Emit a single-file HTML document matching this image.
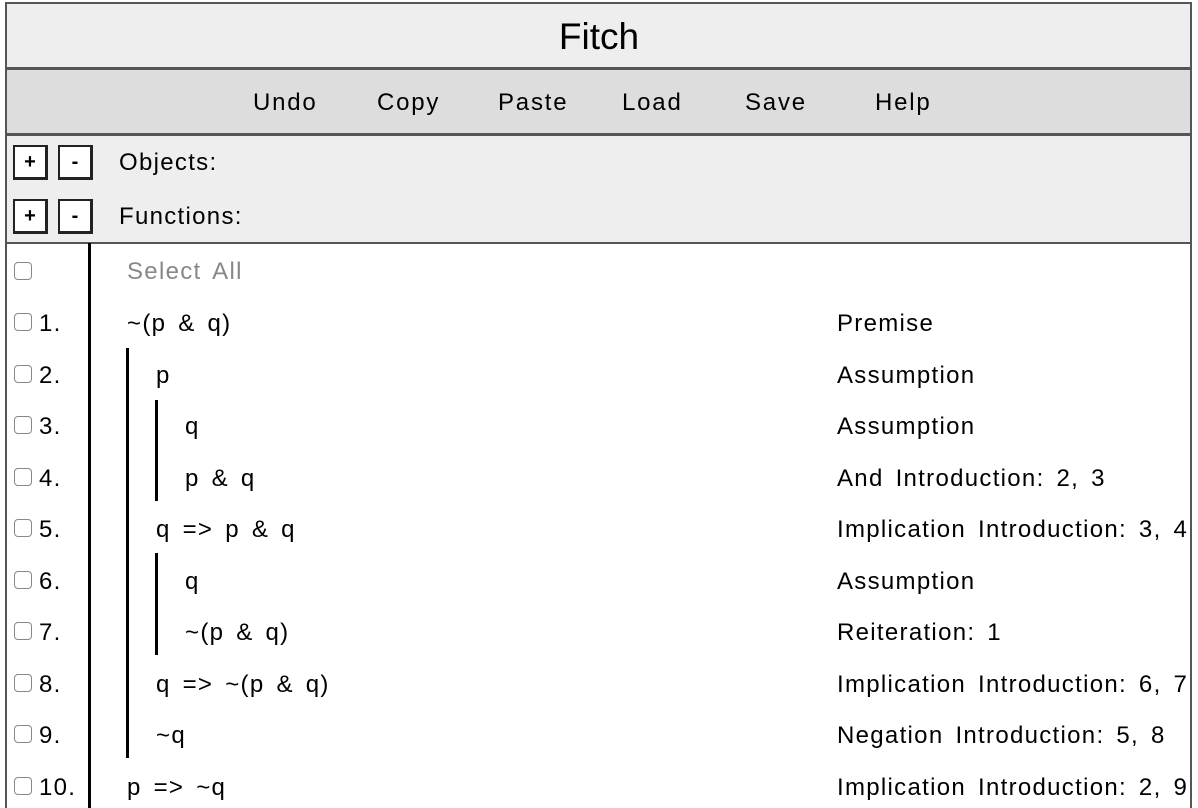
<!DOCTYPE html>
<html><head><meta charset="utf-8"><style>
*{margin:0;padding:0;box-sizing:border-box}
body{width:1198px;height:808px;overflow:hidden;background:#fff;font-family:"Liberation Sans",sans-serif;color:#000;position:relative}
.a{position:absolute;white-space:nowrap}
.box{position:absolute;left:5px;width:1187px;border:2px solid #555}
.btn{position:absolute;width:35px;height:35px;background:#fff;border:2px solid #222;border-right-width:3px;border-bottom-width:3px;font-weight:bold;font-size:20px;text-align:center;line-height:30px}
.cb{position:absolute;width:18px;height:18px;border:1.5px solid #888;border-radius:4px;background:#fff}
.t{position:absolute;font-size:24px;letter-spacing:1.3px;word-spacing:4px;white-space:nowrap;line-height:28px}
.bar{position:absolute;width:3px;background:#000}
</style></head><body>
<div class="box" style="top:2px;height:67px;background:#eee"></div>
<div class="box" style="top:68px;height:67px;background:#ddd"></div>
<div class="box" style="top:134px;height:110px;background:#eee"></div>
<div class="a" style="left:5px;top:243px;width:2px;height:565px;background:#555"></div>
<div class="a" style="left:1190px;top:243px;width:2px;height:565px;background:#555"></div>
<div class="a" style="left:0;top:14px;width:1198px;text-align:center;font-size:37px;line-height:46px">Fitch</div>
<div class="t" style="left:253px;top:89px;letter-spacing:1.8px">Undo</div>
<div class="t" style="left:377px;top:89px;letter-spacing:1.8px">Copy</div>
<div class="t" style="left:498px;top:89px;letter-spacing:1.8px">Paste</div>
<div class="t" style="left:622px;top:89px;letter-spacing:1.8px">Load</div>
<div class="t" style="left:745px;top:89px;letter-spacing:1.8px">Save</div>
<div class="t" style="left:875px;top:89px;letter-spacing:1.8px">Help</div>
<div class="btn" style="left:13px;top:145px">+</div>
<div class="btn" style="left:58px;top:145px">-</div>
<div class="t" style="left:119px;top:149px">Objects:</div>
<div class="btn" style="left:13px;top:199px">+</div>
<div class="btn" style="left:58px;top:199px">-</div>
<div class="t" style="left:119px;top:203px">Functions:</div>
<div class="bar" style="left:88px;top:243px;height:565px"></div>
<div class="bar" style="left:126px;top:348px;height:410px"></div>
<div class="bar" style="left:155px;top:400px;height:101px"></div>
<div class="bar" style="left:155px;top:553px;height:102px"></div>
<div class="cb" style="left:14px;top:262px"></div>
<div class="t" style="left:127px;top:258px;color:#888">Select All</div>

<div class="cb" style="left:14px;top:313px"></div><div class="t" style="left:39px;top:310px">1.</div><div class="t" style="left:127px;top:310px">~(p &amp; q)</div><div class="t" style="left:837px;top:310px">Premise</div>
<div class="cb" style="left:14px;top:365px"></div><div class="t" style="left:39px;top:362px">2.</div><div class="t" style="left:156px;top:362px">p</div><div class="t" style="left:837px;top:362px">Assumption</div>
<div class="cb" style="left:14px;top:416px"></div><div class="t" style="left:39px;top:413px">3.</div><div class="t" style="left:185px;top:413px">q</div><div class="t" style="left:837px;top:413px">Assumption</div>
<div class="cb" style="left:14px;top:468px"></div><div class="t" style="left:39px;top:465px">4.</div><div class="t" style="left:185px;top:465px">p &amp; q</div><div class="t" style="left:837px;top:465px">And Introduction: 2, 3</div>
<div class="cb" style="left:14px;top:519px"></div><div class="t" style="left:39px;top:516px">5.</div><div class="t" style="left:156px;top:516px">q =&gt; p &amp; q</div><div class="t" style="left:837px;top:516px">Implication Introduction: 3, 4</div>
<div class="cb" style="left:14px;top:571px"></div><div class="t" style="left:39px;top:568px">6.</div><div class="t" style="left:185px;top:568px">q</div><div class="t" style="left:837px;top:568px">Assumption</div>
<div class="cb" style="left:14px;top:622px"></div><div class="t" style="left:39px;top:619px">7.</div><div class="t" style="left:185px;top:619px">~(p &amp; q)</div><div class="t" style="left:837px;top:619px">Reiteration: 1</div>
<div class="cb" style="left:14px;top:674px"></div><div class="t" style="left:39px;top:671px">8.</div><div class="t" style="left:156px;top:671px">q =&gt; ~(p &amp; q)</div><div class="t" style="left:837px;top:671px">Implication Introduction: 6, 7</div>
<div class="cb" style="left:14px;top:725px"></div><div class="t" style="left:39px;top:722px">9.</div><div class="t" style="left:156px;top:722px">~q</div><div class="t" style="left:837px;top:722px">Negation Introduction: 5, 8</div>
<div class="cb" style="left:14px;top:777px"></div><div class="t" style="left:39px;top:774px">10.</div><div class="t" style="left:127px;top:774px">p =&gt; ~q</div><div class="t" style="left:837px;top:774px">Implication Introduction: 2, 9</div>
<div class="a" style="left:1192px;top:0;width:6px;height:808px;background:#fff"></div>
</body></html>
